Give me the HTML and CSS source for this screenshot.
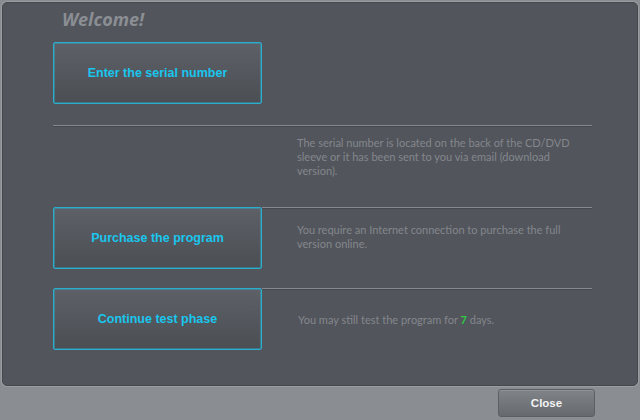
FILE: index.html
```html
<!DOCTYPE html>
<html>
<head>
<meta charset="utf-8">
<link rel="stylesheet" href="styles.css">
</head>
<body>
<div class="panel">
  <div class="title">Welcome!</div>
  <div class="content">
    <button class="action">Enter the serial number</button>
    <div class="sep"></div>
    <p class="desc">The serial number is located on the back of the CD/DVD<br>sleeve or it has been sent to you via email (download<br>version).</p>
    <div class="row row-purchase">
      <button class="action">Purchase the program</button>
      <div class="info"><p>You require an Internet connection to purchase the full<br>version online.</p></div>
    </div>
    <div class="row row-test">
      <button class="action">Continue test phase</button>
      <div class="info"><p>You may still test the program for <b class="days">7</b> days.</p></div>
    </div>
  </div>
</div>
<div class="footer">
  <button class="close">Close</button>
</div>
</body>
</html>
```

FILE: styles.css
```css
html, body {
  margin: 0;
  padding: 0;
}
body {
  width: 640px;
  height: 420px;
  overflow: hidden;
  background: #8a8d92;
  font-family: "Liberation Sans", Arial, sans-serif;
}
.panel {
  box-sizing: border-box;
  height: 384px;
  margin: 2px 2px 0 2px;
  background: #52555c;
  border: 1px solid #45484d;
  border-radius: 5px;
  box-shadow: 0 0 0 1px #9a9da2;
}
.title {
  padding: 5px 0 0 59px;
  height: 22px;
  line-height: 22px;
  font-family: "Open Sans", sans-serif;
  font-weight: bold;
  font-style: italic;
  font-size: 18px;
  color: #8b8e93;
}
.content {
  padding-left: 50px;
}
.action {
  display: flex;
  align-items: center;
  justify-content: center;
  box-sizing: border-box;
  flex: none;
  width: 209px;
  height: 62px;
  margin: 0;
  padding: 0;
  border: 1px solid #2aaecb;
  border-radius: 2px;
  background: linear-gradient(#5d6066, #4b4e53);
  box-shadow: inset 0 0 0 1px rgba(42, 174, 203, 0.45);
  color: #19c6ee;
  font-family: "Liberation Sans", Arial, sans-serif;
  font-weight: bold;
  font-size: 12.5px;
}
.content > .action {
  margin-top: 12px;
}
.sep {
  width: 539px;
  height: 1px;
  margin-top: 21px;
  background: #85888d;
  border-bottom: 1px solid #45484d;
}
.desc, .info p {
  margin: 0;
  font-family: Lato, "Liberation Sans", sans-serif;
  font-size: 11px;
  line-height: 14px;
  color: #84878c;
}
.desc {
  margin-top: 9px;
  padding-left: 244px;
}
.row {
  display: flex;
  width: 539px;
}
.row-purchase {
  margin-top: 29px;
}
.row-test {
  margin-top: 19px;
}
.info {
  flex: 1;
  display: flex;
  align-items: center;
  padding-left: 35px;
  padding-bottom: 4px;
  border-top: 1px solid #85888d;
  box-shadow: inset 0 1px 0 #45484d;
}
.row-test .info {
  padding-left: 36px;
  padding-bottom: 0;
}
.days {
  color: #2ecc40;
  font-weight: bold;
}
.footer {
  display: flex;
  justify-content: flex-end;
  padding: 3px 45px 0 0;
}
.close {
  box-sizing: border-box;
  width: 97px;
  height: 28px;
  margin: 0;
  border: 1px solid #5c5f64;
  border-radius: 3px;
  background: linear-gradient(#808388, #66696e);
  box-shadow: inset 0 1px 0 #8f9297;
  color: #f2f2f2;
  font-family: "Liberation Sans", Arial, sans-serif;
  font-weight: bold;
  font-size: 11.5px;
}
```
